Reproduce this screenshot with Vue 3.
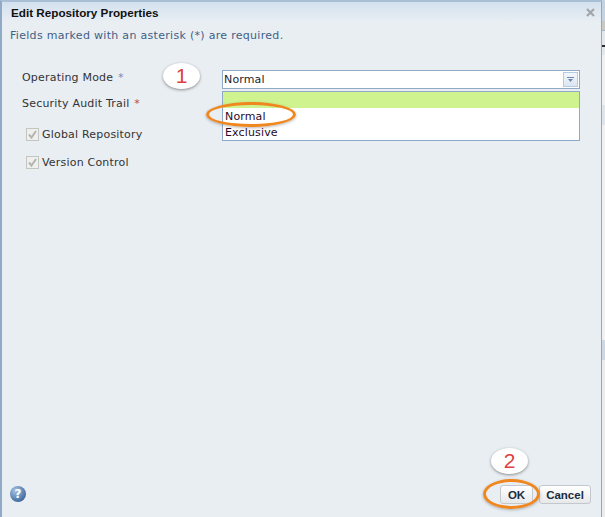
<script setup>
const options = ['Normal', 'Exclusive']
const bands = [
  { h: 21, c: '#c3d3e2' },
  { h: 9, c: '#c9c9c4' },
  { h: 1, c: '#9fb5cc' },
  { h: 14, c: '#e3e8ec' },
  { h: 2, c: '#2c2c2c' },
  { h: 8, c: '#e3e8ec' },
  { h: 50, c: '#f1f1f1' },
  { h: 20, c: '#dfe5ea' },
  { h: 215, c: '#f1f1f1' },
  { h: 20, c: '#ccd9e5' },
  { h: 157, c: '#ececec' }
]
</script>

<template>
  <div class="page">
    <div class="dialog">
      <header class="head">
        <span class="title">Edit Repository Properties</span>
        <svg class="close" width="9" height="9" viewBox="0 0 9 9"><path d="M1 1l7 7M8 1l-7 7" stroke="#a3a6a8" stroke-width="2.2" fill="none"/></svg>
      </header>
      <div class="body">
        <p class="hint">Fields marked with an asterisk (*) are required.</p>
        <div class="form">
          <div class="labels">
            <div class="label first">Operating Mode <i>*</i></div>
            <div class="label second">Security Audit Trail <i>*</i></div>
            <div class="check c1"><span class="box"><svg width="11" height="11" viewBox="0 0 11 11"><path d="M2 5.5l2.5 3L9 2" stroke="#b5b5ae" stroke-width="2" fill="none"/></svg></span>Global Repository</div>
            <div class="check c2"><span class="box"><svg width="11" height="11" viewBox="0 0 11 11"><path d="M2 5.5l2.5 3L9 2" stroke="#b5b5ae" stroke-width="2" fill="none"/></svg></span>Version Control</div>
          </div>
          <div class="combo-wrap">
            <div class="combo">
              <span>Normal</span>
              <span class="arrow"><svg width="7" height="5" viewBox="0 0 7 5"><path d="M0 0h7v1H0zM1 2h5L3.5 5z" fill="#6d88ad"/></svg></span>
            </div>
            <div class="list">
              <div class="opt blank"></div>
              <div v-for="o in options" :key="o" class="opt">{{ o }}</div>
            </div>
          </div>
        </div>
      </div>
      <footer class="foot">
        <span class="help">?</span>
        <div class="buttons">
          <button class="btn">OK</button>
          <button class="btn cancel">Cancel</button>
        </div>
      </footer>
    </div>
    <div class="side">
      <div v-for="(b, i) in bands" :key="i" :style="{ height: b.h + 'px', background: b.c }"></div>
    </div>
    <div class="bubble b1">1</div>
    <div class="bubble b2">2</div>
    <div class="ring r1"></div>
    <div class="ring r2"></div>
  </div>
</template>

<style>
html, body { margin: 0; padding: 0; }
</style>

<style scoped>
.page {
  position: relative;
  display: flex;
  width: 605px;
  height: 517px;
  overflow: hidden;
  background: #c9d3dc;
  font-family: "DejaVu Sans", sans-serif;
  font-size: 11px;
  color: #2b2b2b;
}
.dialog {
  box-sizing: border-box;
  width: 602px;
  height: 517px;
  flex: none;
  border-left: 2px solid #8fa9c6;
  border-right: 1px solid #8fa9c6;
  border-top: 2px solid #a9bfd6;
  background: #e9eef3;
  display: flex;
  flex-direction: column;
}
.side { flex: 1; }
.head {
  height: 20px;
  flex: none;
  display: flex;
  align-items: center;
  justify-content: space-between;
  padding: 0 6px 0 9px;
  box-sizing: border-box;
  background: linear-gradient(#d3e1ee, #e9eef3);
}
.title {
  font-family: "Liberation Sans", sans-serif;
  font-weight: 700;
  font-size: 11.7px;
  color: #111;
}
.body { flex: 1; padding: 7px 0 0 8px; }
.hint { margin: 0; color: #3f5f86; font-size: 11px; line-height: 13px; letter-spacing: .3px; }
.form { display: flex; margin-top: 29px; }
.labels { width: 212px; padding-left: 12px; box-sizing: border-box; letter-spacing: .2px; }
.label { line-height: 13px; color: #333; }
.label i { font-style: normal; color: #6d8bb3; margin-left: 1px; }
.second { margin-top: 13px; }
.second i { color: #b04a5a; }
.check { display: flex; align-items: center; line-height: 13px; color: #333; }
.c1 { margin-top: 18px; margin-left: 4px; }
.c2 { margin-top: 15px; margin-left: 4px; }
.box {
  box-sizing: border-box;
  width: 13px;
  height: 13px;
  border: 1px solid #c5c5bf;
  background: #eef0f0;
  margin-right: 3px;
  display: flex;
}
.combo-wrap { width: 358px; margin-top: -1px; letter-spacing: .15px; }
.combo {
  box-sizing: border-box;
  height: 19px;
  border: 1px solid #8fa9c6;
  background: #fff;
  display: flex;
  align-items: center;
  justify-content: space-between;
  padding-left: 1px;
  color: #1c1c2c;
}
.arrow {
  box-sizing: border-box;
  width: 15px;
  height: 15px;
  margin-right: 1px;
  border: 1px solid #b4cbe6;
  background: linear-gradient(#f3f7fb, #dbe6f2);
  display: flex;
  align-items: center;
  justify-content: center;
}
.list {
  box-sizing: border-box;
  margin-top: 2px;
  height: 50px;
  border: 1px solid #8fa9c6;
  background: #fff;
}
.opt { height: 16px; line-height: 17px; padding-left: 2px; color: #2a0a2a; }
.blank { height: 16px; background: #cff48f; }
.foot {
  flex: none;
  height: 32px;
  display: flex;
  align-items: flex-start;
  justify-content: space-between;
  padding: 0 10px 0 8px;
  box-sizing: border-box;
}
.help {
  width: 16px;
  height: 16px;
  margin-top: 1px;
  border-radius: 50%;
  background: radial-gradient(circle at 35% 30%, #a8c4e2, #3f6a9e 75%);
  color: #fff;
  font-weight: 700;
  font-size: 12px;
  line-height: 16px;
  text-align: center;
}
.buttons { display: flex; gap: 6px; }
.btn {
  box-sizing: border-box;
  height: 19px;
  width: 33px;
  padding: 0;
  border: 1px solid #c4c8cc;
  border-radius: 3px;
  background: linear-gradient(#fff, #e6e8ea);
  font-family: "Liberation Sans", sans-serif;
  font-weight: 700;
  font-size: 11.5px;
  color: #1c2a3c;
}
.cancel { width: 52px; }
.bubble {
  position: absolute;
  width: 37px;
  height: 26px;
  border-radius: 50%;
  background: #fff;
  box-shadow: 0 1px 3px rgba(60, 60, 60, .55);
  color: #e0403f;
  font-family: "Liberation Sans", sans-serif;
  font-size: 21px;
  line-height: 25px;
  text-align: center;
}
.b1 { left: 163px; top: 63px; }
.b2 { left: 491px; top: 448px; }
.ring {
  position: absolute;
  box-sizing: border-box;
  border: 3px solid #f0861e;
  border-radius: 50%;
  box-shadow: 0 1px 3px rgba(70, 70, 70, .4);
}
.r1 { left: 206px; top: 102px; width: 90px; height: 25px; }
.r2 { left: 483px; top: 479px; width: 57px; height: 30px; }
</style>
